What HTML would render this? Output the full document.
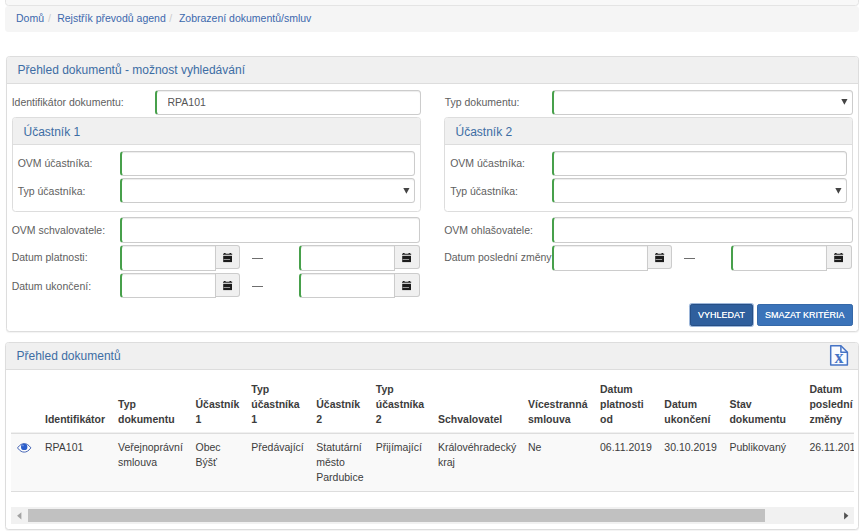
<!DOCTYPE html>
<html lang="cs">
<head>
<meta charset="utf-8">
<title>Zobrazení dokumentů/smluv</title>
<style>
html,body{margin:0;padding:0;background:#fff;}
body{width:861px;height:531px;position:relative;overflow:hidden;font-family:"Liberation Sans",Arial,sans-serif;font-size:10.5px;color:#333;}
*{box-sizing:border-box;}
.abs{position:absolute;}
.t{position:absolute;line-height:20px;white-space:nowrap;}
.navbar{position:absolute;left:5px;top:-3px;width:854px;height:9px;background:#f8f8f8;border:1px solid #e4e4e4;border-radius:0 0 3.5px 3.5px;}
.breadcrumb{position:absolute;left:5px;top:6px;width:854px;height:25.5px;background:#f5f5f5;border-radius:3.5px;margin:0;padding:0;list-style:none;}
.breadcrumb a{color:#3c68ad;text-decoration:none;}
.breadcrumb .sep{color:#ccc;}
.panel{position:absolute;background:#fff;border:1px solid #ddd;border-radius:3.5px;box-shadow:0 1px 1px rgba(0,0,0,.05);}
.panel-heading{position:absolute;left:0;top:0;right:0;background:#f0f0f0;border-bottom:1px solid #ddd;border-radius:2.5px 2.5px 0 0;}
.panel-title{position:absolute;font-size:12px;line-height:20px;color:#3d6da4;white-space:nowrap;margin:0;font-weight:normal;}
label.t{color:#606060;margin-left:0.7px}
.inp{position:absolute;height:25px;background:#fff;border:1px solid #ccc;border-left:2px solid #47a04b;border-radius:3.5px;box-shadow:inset 0 1px 1px rgba(0,0,0,.075);font:inherit;color:#555;padding:0 0 1.5px 10.5px;margin:0;outline:none;}
.inp.grp{border-radius:3.5px 0 0 3.5px;}
.addon{position:absolute;width:24.5px;height:24px;background:#f0f0f0;border:1px solid #ccc;border-left:none;border-radius:0 3px 3px 0;padding:0;margin:0;}
.addon svg{position:absolute;left:7.2px;top:7px;}
.sel svg{position:absolute;right:3.5px;top:9px;}
.dash{position:absolute;width:11px;height:1px;background:#6e6e6e;}
.btn{position:absolute;height:22px;top:304px;border-radius:2.2px;color:#fff;font:9px/16.6px "Liberation Sans",Arial,sans-serif;text-shadow:0 0 0.6px rgba(255,255,255,.8);text-align:center;padding:0;margin:0;white-space:nowrap;}
.btn1{left:690px;width:63px;background:#2f5f9d;border:1px solid #264f86;box-shadow:0 0 0 1px #9db7da;}
.btn2{left:757px;width:95.5px;background:#3b73b9;border:1px solid #3568a8;}
table{border-collapse:collapse;position:absolute;left:11px;top:375px;table-layout:fixed;}
th,td{padding:0 0 0 7px;text-align:left;vertical-align:top;line-height:15px;font-size:10.5px;color:#3c3c3c;}
th{font-weight:bold;vertical-align:bottom;height:57.7px;padding-bottom:6.2px;border-bottom:1.5px solid #ddd;}
td{height:57.5px;padding-top:6px;background:#f9f9f9;border-bottom:1px solid #ddd;}
</style>
</head>
<body>
<div class="navbar"></div>
<ul class="breadcrumb">
  <li class="t" style="left:11px;top:2.3px"><a>Domů</a></li>
  <li class="t sep" style="left:42.9px;top:2.3px">/</li>
  <li class="t" style="left:52.2px;top:2.3px"><a>Rejstřík převodů agend</a></li>
  <li class="t sep" style="left:164.2px;top:2.3px">/</li>
  <li class="t" style="left:173.9px;top:2.3px"><a>Zobrazení dokumentů/smluv</a></li>
</ul>

<div class="panel" style="left:6px;top:56px;width:852.5px;height:276px;">
  <div class="panel-heading" style="height:26.5px"><h3 class="panel-title" style="left:10.5px;top:2.7px">Přehled dokumentů - možnost vyhledávání</h3></div>
</div>

<!-- left column -->
<label class="t" style="left:11px;top:91.9px">Identifikátor dokumentu:</label>
<input class="inp" style="left:155px;top:90px;width:265.5px" value="RPA101">

<div class="panel" style="left:12px;top:117px;width:408.5px;height:95px;box-shadow:none">
  <div class="panel-heading" style="height:27px"><h3 class="panel-title" style="left:10.5px;top:3.7px">Účastník 1</h3></div>
</div>
<label class="t" style="left:17px;top:152.9px">OVM účastníka:</label>
<input class="inp" style="left:120px;top:151px;width:294.5px">
<label class="t" style="left:17px;top:180.7px">Typ účastníka:</label>
<div class="inp sel" style="left:120px;top:178.4px;width:294.5px;height:25px"><svg width="7" height="6" viewBox="0 0 7 6"><path d="M0.3 0h6.200L3.400 5.700z" fill="#444"/></svg></div>

<label class="t" style="left:11px;top:219.9px">OVM schvalovatele:</label>
<input class="inp" style="left:120px;top:217px;width:300px;height:25.5px">
<label class="t" style="left:11px;top:246.6px">Datum platnosti:</label>
<input class="inp grp" style="left:120px;top:245px;width:95.5px;height:25.5px">
<button class="addon" style="left:215.5px;top:245px"><svg width="10" height="10" viewBox="0 0 10 10"><path d="M0 0.8h9.2v0.9H0zM0.9 0h1.7v1H0.9zM6.5 0h1.7v1H6.500z" fill="#1c1c1c"/><path d="M0.2 2.800h8.800v6.300H0.200z" fill="#1c1c1c"/><path d="M0.500 6h6.600v1H0.500z" fill="#9a9a9a"/></svg></button>
<div class="dash" style="left:252px;top:258px"></div>
<input class="inp grp" style="left:299px;top:245px;width:96px;height:25.5px">
<button class="addon" style="left:395px;top:245px"><svg width="10" height="10" viewBox="0 0 10 10"><path d="M0 0.8h9.2v0.9H0zM0.9 0h1.7v1H0.9zM6.5 0h1.7v1H6.500z" fill="#1c1c1c"/><path d="M0.2 2.800h8.800v6.300H0.200z" fill="#1c1c1c"/><path d="M0.500 6h6.600v1H0.500z" fill="#9a9a9a"/></svg></button>

<label class="t" style="left:11px;top:275.8px">Datum ukončení:</label>
<input class="inp grp" style="left:120px;top:273px;width:95.5px;height:25px">
<button class="addon" style="left:215.5px;top:273px"><svg width="10" height="10" viewBox="0 0 10 10"><path d="M0 0.8h9.2v0.9H0zM0.9 0h1.7v1H0.9zM6.5 0h1.7v1H6.500z" fill="#1c1c1c"/><path d="M0.2 2.800h8.800v6.300H0.200z" fill="#1c1c1c"/><path d="M0.500 6h6.600v1H0.500z" fill="#9a9a9a"/></svg></button>
<div class="dash" style="left:252px;top:286px"></div>
<input class="inp grp" style="left:299px;top:273px;width:96px;height:25px">
<button class="addon" style="left:395px;top:273px"><svg width="10" height="10" viewBox="0 0 10 10"><path d="M0 0.8h9.2v0.9H0zM0.9 0h1.7v1H0.9zM6.5 0h1.7v1H6.500z" fill="#1c1c1c"/><path d="M0.2 2.800h8.800v6.300H0.200z" fill="#1c1c1c"/><path d="M0.500 6h6.600v1H0.500z" fill="#9a9a9a"/></svg></button>

<!-- right column -->
<label class="t" style="left:444px;top:91.9px">Typ dokumentu:</label>
<div class="inp sel" style="left:552px;top:90px;width:300.5px"><svg style="top:7.9px" width="7" height="6" viewBox="0 0 7 6"><path d="M0.3 0h6.200L3.400 5.700z" fill="#444"/></svg></div>

<div class="panel" style="left:444px;top:117px;width:408.5px;height:95px;box-shadow:none">
  <div class="panel-heading" style="height:27px"><h3 class="panel-title" style="left:10.5px;top:3.7px">Účastník 2</h3></div>
</div>
<label class="t" style="left:449.5px;top:152.9px">OVM účastníka:</label>
<input class="inp" style="left:552px;top:151px;width:294.5px">
<label class="t" style="left:449.5px;top:180.7px">Typ účastníka:</label>
<div class="inp sel" style="left:552px;top:178.4px;width:294.5px;height:25px"><svg width="7" height="6" viewBox="0 0 7 6"><path d="M0.3 0h6.200L3.400 5.700z" fill="#444"/></svg></div>

<label class="t" style="left:443.5px;top:219.9px">OVM ohlašovatele:</label>
<input class="inp" style="left:552px;top:217px;width:300.5px;height:25.5px">
<label class="t" style="left:443.5px;top:246.6px">Datum poslední změny</label>
<input class="inp grp" style="left:552px;top:245px;width:95.5px;height:25.5px">
<button class="addon" style="left:647.5px;top:245px"><svg width="10" height="10" viewBox="0 0 10 10"><path d="M0 0.8h9.2v0.9H0zM0.9 0h1.7v1H0.9zM6.5 0h1.7v1H6.500z" fill="#1c1c1c"/><path d="M0.2 2.800h8.800v6.300H0.200z" fill="#1c1c1c"/><path d="M0.500 6h6.600v1H0.500z" fill="#9a9a9a"/></svg></button>
<div class="dash" style="left:684px;top:258px"></div>
<input class="inp grp" style="left:731px;top:245px;width:96px;height:25.5px">
<button class="addon" style="left:827px;top:245px"><svg width="10" height="10" viewBox="0 0 10 10"><path d="M0 0.8h9.2v0.9H0zM0.9 0h1.7v1H0.9zM6.5 0h1.7v1H6.500z" fill="#1c1c1c"/><path d="M0.2 2.800h8.800v6.300H0.200z" fill="#1c1c1c"/><path d="M0.500 6h6.600v1H0.500z" fill="#9a9a9a"/></svg></button>

<button class="btn btn1">VYHLEDAT</button>
<button class="btn btn2">SMAZAT KRITÉRIA</button>

<!-- results panel -->
<div class="panel" style="left:5px;top:342px;width:854px;height:187.5px;">
  <div class="panel-heading" style="height:27px"><h3 class="panel-title" style="left:10.5px;top:2.9px">Přehled dokumentů</h3>
  <svg class="abs" style="left:823px;top:2px" width="20" height="23" viewBox="0 0 20 23"><path d="M1.700 0.800h10.200l6.500 6.500v12.700H1.700z" fill="#f9fbff" stroke="#4573c5" stroke-width="1.500" stroke-linejoin="round"/><path d="M11.900 0.800v6.500h6.500" fill="none" stroke="#4573c5" stroke-width="1.500" stroke-linejoin="round"/><text x="9.900" y="17.700" text-anchor="middle" font-family="Liberation Serif, serif" font-weight="bold" font-size="18" fill="#4573c5">x</text></svg>
  </div>
</div>

<div class="abs" style="left:11px;top:370px;width:842.8px;height:140px;overflow:hidden">
<table style="left:0;top:6px;width:880px">
<colgroup><col style="width:27px"><col style="width:73px"><col style="width:77.5px"><col style="width:55.75px"><col style="width:65px"><col style="width:59.5px"><col style="width:62.25px"><col style="width:90px"><col style="width:72px"><col style="width:64.3px"><col style="width:65.1px"><col style="width:80px"><col style="width:88.5px"></colgroup>
<thead><tr>
<th></th><th>Identifikátor</th><th>Typ<br>dokumentu</th><th>Účastník<br>1</th><th>Typ<br>účastníka<br>1</th><th>Účastník<br>2</th><th>Typ<br>účastníka<br>2</th><th>Schvalovatel</th><th>Vícestranná<br>smlouva</th><th>Datum<br>platnosti<br>od</th><th>Datum<br>ukončení</th><th>Stav<br>dokumentu</th><th>Datum<br>poslední<br>změny</th>
</tr></thead>
<tbody><tr>
<td style="position:relative"><svg class="abs" style="left:5.8px;top:9.1px" width="15" height="10" viewBox="0 0 15 10"><path d="M0.5 4.9C3 1.5 5.200 0.600 7.200 0.600S11.400 1.500 13.900 4.900C11.400 8.200 9.200 9.100 7.200 9.100S3 8.200 0.500 4.900z" fill="#fdfdfd" stroke="#4565b5" stroke-width="1"/><circle cx="7.2" cy="3.9" r="3.2" fill="#2b5ecb"/><circle cx="6" cy="2.600" r="0.8" fill="#7f9fe3"/></svg></td>
<td>RPA101</td><td>Veřejnoprávní<br>smlouva</td><td>Obec<br>Býšť</td><td>Předávající</td><td>Statutární<br>město<br>Pardubice</td><td>Přijímající</td><td>Královéhradecký<br>kraj</td><td>Ne</td><td>06.11.2019</td><td>30.10.2019</td><td>Publikovaný</td><td>26.11.2019</td>
</tr></tbody>
</table>
</div>
<div class="abs" style="left:11px;top:432px;width:842.8px;height:1px;background:#f0f0f0"></div>
<div class="abs" style="left:11px;top:507.2px;width:842.8px;height:16.6px;background:#f1f1f1">
  <div class="abs" style="left:17.2px;top:1.8px;width:736.6px;height:12.8px;background:#c1c1c1"></div>
  <svg class="abs" style="left:5.9px;top:4.7px" width="5" height="8" viewBox="0 0 5 8"><path d="M4.4 0.2v7.2L0.1 3.8z" fill="#a3a3a3"/></svg>
  <svg class="abs" style="left:832.8px;top:4.7px" width="5" height="8" viewBox="0 0 5 8"><path d="M0.1 0.2v7.2L4.4 3.8z" fill="#505050"/></svg>
</div>
</body>
</html>
